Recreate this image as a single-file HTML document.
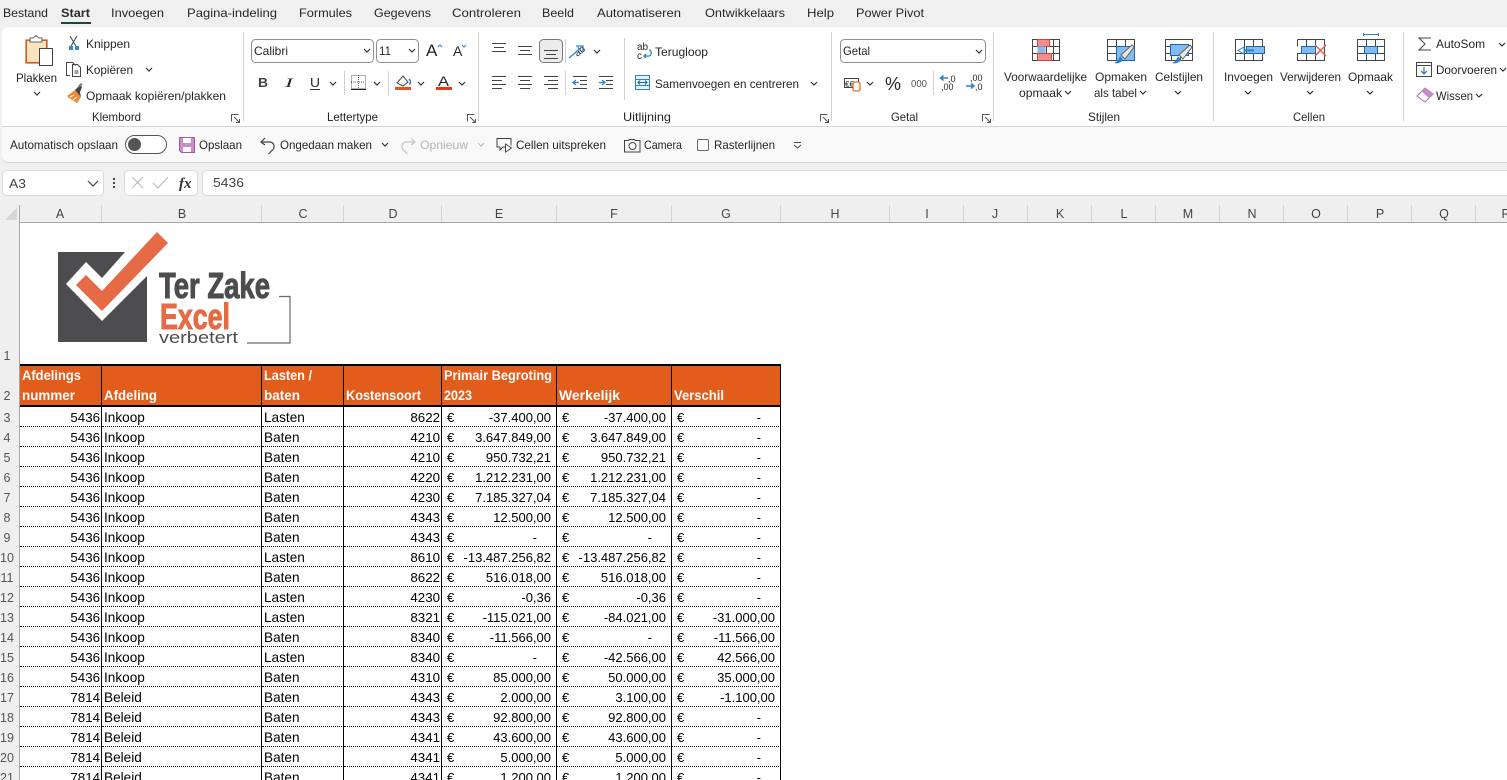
<!DOCTYPE html>
<html lang="nl"><head><meta charset="utf-8"><title>Excel</title>
<style>
html,body{margin:0;padding:0;width:1507px;height:780px;overflow:hidden;background:#fff}
#w{position:relative;width:1507px;height:780px;overflow:hidden}
svg{position:absolute;left:0;top:0}
svg text{font-family:"Liberation Sans",sans-serif;font-size:12px;fill:#262626}
.c text{font-size:12.5px;fill:#444;text-anchor:middle}
.r text{font-size:12.5px;fill:#555;text-anchor:middle}
table{position:absolute;left:20px;top:407px;border-collapse:separate;border-spacing:0;table-layout:fixed;width:761px;font:13.3px "Liberation Sans",sans-serif;color:#000}
td{height:17px;padding:2px 0 0;border-bottom:1px dotted #000;border-right:1px solid #000;line-height:17px;white-space:nowrap;overflow:hidden;box-sizing:content-box;position:relative}
td.n{text-align:right;padding-right:1px}
td.l{padding-left:2px;font-size:13.6px}
td.m{text-align:right;padding-right:5px;font-size:13px}
td.m i{font-style:normal;position:absolute;left:5px;top:2px}
td.d{text-align:right;padding-right:19px;font-size:13px}
td.d i{font-style:normal;position:absolute;left:5px;top:2px}
</style></head><body><div id="w">
<svg width="1507" height="780" viewBox="0 0 1507 780" xmlns="http://www.w3.org/2000/svg">
<defs>
<path id="ch" d="M0 0l3 3 3-3" fill="none" stroke="#333" stroke-width="1.2"/>
<path id="chg" d="M0 0l3 3 3-3" fill="none" stroke="#bbb" stroke-width="1.2"/>
<path id="cor" d="M0 7V0h7M2.500 2.500l5 5M8 4.500V8H4.500" fill="none" stroke="#555" stroke-width="1"/>
</defs>
<rect width="1507" height="205" fill="#f0f0f0"/>
<!-- tabs -->
<text x="3" y="17" textLength="45" lengthAdjust="spacingAndGlyphs">Bestand</text>
<text x="61" y="17" textLength="29" lengthAdjust="spacingAndGlyphs" style="font-weight:bold;fill:#2b2b2b">Start</text>
<rect x="61" y="22" width="30" height="2" fill="#20463a"/>
<text x="111" y="17" textLength="53" lengthAdjust="spacingAndGlyphs">Invoegen</text>
<text x="187" y="17" textLength="90" lengthAdjust="spacingAndGlyphs">Pagina-indeling</text>
<text x="299" y="17" textLength="53" lengthAdjust="spacingAndGlyphs">Formules</text>
<text x="374" y="17" textLength="57" lengthAdjust="spacingAndGlyphs">Gegevens</text>
<text x="452" y="17" textLength="69" lengthAdjust="spacingAndGlyphs">Controleren</text>
<text x="542" y="17" textLength="32" lengthAdjust="spacingAndGlyphs">Beeld</text>
<text x="597" y="17" textLength="84" lengthAdjust="spacingAndGlyphs">Automatiseren</text>
<text x="705" y="17" textLength="80" lengthAdjust="spacingAndGlyphs">Ontwikkelaars</text>
<text x="807" y="17" textLength="27" lengthAdjust="spacingAndGlyphs">Help</text>
<text x="856" y="17" textLength="68" lengthAdjust="spacingAndGlyphs">Power Pivot</text>
<!-- ribbon panel -->
<path d="M2 162V33a6 6 0 0 1 6-6H1507V162H8a6 6 0 0 1-6-6z" fill="#000" opacity=".12" transform="translate(0,1)"/>
<path d="M2 156V33a6 6 0 0 1 6-6H1507V162H8a6 6 0 0 1-6-6z" fill="#fff"/>
<path d="M2 127H1507V162H8a6 6 0 0 1-6-6z" fill="#f9f9f9"/>
<rect x="2" y="126" width="1505" height="1" fill="#d6d6d6"/>
<!-- group separators -->
<g fill="#cfcfcf">
<rect x="243" y="32" width="1" height="89"/><rect x="478" y="32" width="1" height="89"/><rect x="831" y="32" width="1" height="89"/><rect x="993" y="32" width="1" height="89"/><rect x="1213" y="32" width="1" height="89"/><rect x="1403" y="32" width="1" height="89"/>
<rect x="344" y="71" width="1" height="24"/><rect x="388" y="71" width="1" height="24"/><rect x="565" y="39" width="1" height="24"/><rect x="565" y="71" width="1" height="24"/><rect x="624" y="38" width="1" height="62"/><rect x="933" y="71" width="1" height="24"/>
</g>
<!-- clipboard -->
<rect x="26.500" y="40.500" width="20" height="22" fill="#fbe3c0" stroke="#d2691e" stroke-width="1"/>
<rect x="26" y="40" width="21" height="23" fill="none" stroke="#d9541e" stroke-width="1.2"/>
<path d="M30 40v-2h3l3-2.500 3 2.500h3v4H30z" fill="#fff" stroke="#666"/>
<rect x="39.500" y="48.500" width="13" height="17" fill="#fff" stroke="#444"/>
<text x="16" y="82" textLength="41" lengthAdjust="spacingAndGlyphs">Plakken</text>
<use href="#ch" x="34" y="92"/>
<path d="M70 48L77 36M77 48L70 36" stroke="#444" fill="none"/>
<rect x="69" y="46" width="4" height="4" fill="#3b87c9"/><rect x="75" y="46" width="4" height="4" fill="#3b87c9"/>
<text x="86" y="48" textLength="44" lengthAdjust="spacingAndGlyphs">Knippen</text>
<path d="M70 75.500h-3.500V62.500h6l3 3M72.500 64.500h5l3 3v9h-8z" fill="#fff" stroke="#444"/>
<path d="M74.500 71h4M74.500 73h4" stroke="#444"/>
<text x="86" y="74" textLength="47" lengthAdjust="spacingAndGlyphs">Kopiëren</text>
<use href="#ch" x="146" y="68"/>
<path d="M67 96l8-6 6 7-4 6c-3-2-7-4-10-7z" fill="#f08a30"/>
<path d="M70 97l4-2M73 100l4-3" stroke="#fff" fill="none"/>
<path d="M75 90l5-5 2 2-2 5 1 5z" fill="#444"/>
<path d="M78 86l3-3 1.500 1.500-3 3z" fill="#777"/>
<text x="86" y="100" textLength="140" lengthAdjust="spacingAndGlyphs">Opmaak kopiëren/plakken</text>
<text x="92" y="121" textLength="49" lengthAdjust="spacingAndGlyphs">Klembord</text>
<use href="#cor" x="231.500" y="114.500"/>
<!-- font -->
<rect x="251.500" y="39.500" width="122" height="23" rx="4" fill="#fff" stroke="#8f8f8f"/>
<text x="254" y="55" textLength="34" lengthAdjust="spacingAndGlyphs">Calibri</text>
<use href="#ch" x="364" y="49"/>
<rect x="376.500" y="39.500" width="42" height="23" rx="4" fill="#fff" stroke="#8f8f8f"/>
<text x="379" y="55" textLength="12" lengthAdjust="spacingAndGlyphs">11</text>
<use href="#ch" x="409" y="49"/>
<text x="426" y="56" style="font-size:17px">A</text>
<path d="M438 47l2-2 2 2" fill="none" stroke="#2f80c8"/>
<text x="453" y="56" style="font-size:14px">A</text>
<path d="M462 45l2 2 2-2" fill="none" stroke="#2f80c8"/>
<text x="258" y="87" textLength="10" lengthAdjust="spacingAndGlyphs" style="font-weight:bold;font-size:13px;fill:#444">B</text>
<text x="285" y="87" textLength="8" lengthAdjust="spacingAndGlyphs" style="font-style:italic;font-size:13px;font-family:'Liberation Serif',serif">I</text>
<text x="310" y="87" textLength="10" lengthAdjust="spacingAndGlyphs" style="font-size:13px">U</text>
<rect x="310" y="89" width="10" height="1" fill="#333"/>
<use href="#ch" x="330" y="82"/>
<rect x="351.500" y="75.500" width="14" height="13" fill="none" stroke="#666" stroke-dasharray="1 1"/>
<path d="M358.500 75v14M351 82h15" stroke="#666" stroke-dasharray="1 1"/>
<rect x="351" y="89" width="15" height="1" fill="#222"/>
<use href="#ch" x="374" y="82"/>
<path d="M397 83l6-7 5 6-5 4z" fill="#fff" stroke="#444"/>
<path d="M409 84c2 0 2-3 0-5" fill="none" stroke="#2f80c8" stroke-width="1.500"/>
<rect x="395" y="87" width="16" height="3" fill="#e2571c"/>
<use href="#ch" x="418" y="82"/>
<text x="438" y="86" textLength="11" lengthAdjust="spacingAndGlyphs" style="font-size:14px">A</text>
<rect x="436" y="87" width="16" height="3" fill="#e23c10"/>
<use href="#ch" x="459" y="82"/>
<text x="327" y="121" textLength="51" lengthAdjust="spacingAndGlyphs">Lettertype</text>
<use href="#cor" x="467.500" y="114.500"/>
<!-- align -->
<g stroke="#444" fill="none">
<path d="M492 43.500h14M494 47.500h10M492 51.500h14"/>
<path d="M518 46.500h14M520 50.500h10M518 54.500h14"/>
<rect x="539.500" y="39.500" width="23" height="23" rx="4" fill="#ececec" stroke="#777"/>
<path d="M544 50.500h14M546 54.500h10M544 58.500h14"/>
<path d="M492 76.500h14M492 80.500h10M492 84.500h14M492 88.500h10"/>
<path d="M518 76.500h14M520 80.500h10M518 84.500h14M520 88.500h10"/>
<path d="M544 76.500h14M548 80.500h10M544 84.500h14M548 88.500h10"/>
<path d="M573 76.500h14M580 80.500h7M580 84.500h7M573 88.500h14"/>
<path d="M599 76.500h14M606 80.500h7M606 84.500h7M599 88.500h14"/>
</g>
<path d="M579 82.500h-6M576 80l-3 2.500 3 2.500" stroke="#2f80c8" stroke-width="1.300" fill="none"/>
<path d="M599 82.500h6M602 80l3 2.500-3 2.500" stroke="#2f80c8" stroke-width="1.300" fill="none"/>
<text x="573" y="55" transform="rotate(-40 578 50)" style="font-size:10px">ab</text>
<path d="M569 58l13-11M576 46h7v6" fill="none" stroke="#2f80c8" stroke-width="1.300"/>
<use href="#ch" x="594" y="50"/>
<text x="637" y="50" style="font-size:10px">ab</text>
<text x="637" y="59" style="font-size:10px">c</text>
<path d="M649 50c3 0 3 6 0 6h-5M646 54l-2 2 2 2" fill="none" stroke="#2f80c8" stroke-width="1.300"/>
<text x="655" y="56" textLength="53" lengthAdjust="spacingAndGlyphs">Terugloop</text>
<rect x="635.500" y="75.500" width="14" height="14" fill="#e8f2fb" stroke="#2f80c8"/>
<path d="M635 79.500h15M635 85.500h15" stroke="#2f80c8"/>
<path d="M638 82.500h9M640 80.500l-2 2 2 2M645 80.500l2 2-2 2" stroke="#1668b5" fill="none"/>
<text x="655" y="88" textLength="144" lengthAdjust="spacingAndGlyphs">Samenvoegen en centreren</text>
<use href="#ch" x="811" y="82"/>
<text x="623" y="121" textLength="48" lengthAdjust="spacingAndGlyphs">Uitlijning</text>
<use href="#cor" x="820.500" y="114.500"/>
<!-- number -->
<rect x="840.500" y="39.500" width="145" height="23" rx="4" fill="#fff" stroke="#8f8f8f"/>
<text x="843" y="55" textLength="27" lengthAdjust="spacingAndGlyphs">Getal</text>
<use href="#ch" x="976" y="50"/>
<rect x="844.500" y="78.500" width="14" height="9" fill="none" stroke="#444"/>
<text x="845" y="87" style="font-size:8px">€€</text>
<rect x="853" y="82" width="7" height="9" rx="2" fill="#fff" stroke="#e8701e" stroke-width="1.300"/>
<use href="#ch" x="867" y="82"/>
<text x="885" y="90" style="font-size:18px" textLength="16" lengthAdjust="spacingAndGlyphs">%</text>
<text x="911" y="87" textLength="16" lengthAdjust="spacingAndGlyphs" style="font-size:10px;fill:#555">000</text>
<path d="M948 78h-7M943.500 75.500l-3 2.500 3 2.500" fill="none" stroke="#2f80c8" stroke-width="1.500"/>
<text x="948" y="82" style="font-size:9px">,0</text>
<text x="941" y="90" style="font-size:9px">,00</text>
<text x="970" y="81" style="font-size:9px">,00</text>
<path d="M966 86h8M971 83.500l3 2.500-3 2.500" fill="none" stroke="#2f80c8" stroke-width="1.500"/>
<text x="975" y="90" style="font-size:9px">,0</text>
<text x="891" y="121" textLength="27" lengthAdjust="spacingAndGlyphs">Getal</text>
<use href="#cor" x="982.500" y="114.500"/>
<!-- styles -->
<g stroke="#444" fill="none">
<rect x="1032.500" y="39.500" width="27" height="21" fill="#fff"/>
<path d="M1039.500 39v22M1046.500 39v22M1053.500 39v22M1032 46.500h28M1032 53.500h28"/>
<rect x="1107.500" y="39.500" width="27" height="21" fill="#fff"/>
<path d="M1116.500 39v22M1125.500 39v22M1107 46.500h28M1107 53.500h28"/>
<rect x="1165.500" y="39.500" width="27" height="21" fill="#fff"/>
<path d="M1165 46.500h6M1171.500 54v7M1180.500 54v7M1165 53.500h28"/>
</g>
<rect x="1037.500" y="39.500" width="12" height="7" fill="#ee8f94" stroke="#d8432c"/>
<rect x="1037.500" y="46.500" width="8" height="7" fill="#82bbec"/>
<rect x="1037.500" y="53.500" width="14" height="7" fill="#ee8f94" stroke="#d8432c"/>
<rect x="1116.500" y="46.500" width="18" height="14" fill="#82bbec" stroke="#1668b5"/>
<rect x="1170.500" y="44.500" width="18" height="11" fill="#82bbec" stroke="#1668b5"/>
<path d="M1114 63c3 1 7 0 9-3l-3-4c-1 3-3 6-6 7z" fill="#2f80c8"/>
<path d="M1121 55l11-10 2 2-9 12z" fill="#e8e8e8" stroke="#666"/>
<path d="M1172 63c3 1 7 0 9-3l-3-4c-1 3-3 6-6 7z" fill="#2f80c8"/>
<path d="M1179 55l11-10 2 2-9 12z" fill="#e8e8e8" stroke="#666"/>
<text x="1004" y="81" textLength="83" lengthAdjust="spacingAndGlyphs">Voorwaardelijke</text>
<text x="1019" y="97" textLength="43" lengthAdjust="spacingAndGlyphs">opmaak</text>
<use href="#ch" x="1065" y="91"/>
<text x="1095" y="81" textLength="52" lengthAdjust="spacingAndGlyphs">Opmaken</text>
<text x="1094" y="97" textLength="43" lengthAdjust="spacingAndGlyphs">als tabel</text>
<use href="#ch" x="1140" y="91"/>
<text x="1155" y="81" textLength="48" lengthAdjust="spacingAndGlyphs">Celstijlen</text>
<use href="#ch" x="1175" y="91"/>
<text x="1088" y="121" textLength="32" lengthAdjust="spacingAndGlyphs">Stijlen</text>
<!-- cells -->
<g stroke="#444" fill="none">
<rect x="1235.500" y="39.500" width="27" height="21" fill="#fff"/>
<path d="M1244.500 39v22M1253.500 39v22M1235 53.500h28"/>
<path d="M1297.500 39.500h27v21h-27v-7h7M1297.500 39.500v7M1306.500 39v7M1315.500 39v7M1306.500 54v7M1315.500 54v7" fill="#fff"/>
<rect x="1357.500" y="39.500" width="27" height="21" fill="#fff"/>
<path d="M1366.500 39v22M1375.500 39v22M1357 46.500h28M1357 53.500h28"/>
</g>
<rect x="1246.500" y="46.500" width="18" height="7" fill="#82bbec" stroke="#1668b5"/>
<path d="M1254 50h-10v-3l-6 3.500 6 3.500v-3h10" fill="#fff" stroke="#2f80c8"/>
<rect x="1301.500" y="46.500" width="14" height="7" fill="#82bbec" stroke="#1668b5"/>
<path d="M1315 45l11 11M1326 45l-11 11" stroke="#e8604a" stroke-width="1.500"/>
<rect x="1364.500" y="46.500" width="13" height="7" fill="#82bbec" stroke="#1668b5"/>
<path d="M1363.500 33v3M1378.500 33v3M1363 34.500h16" stroke="#2f80c8"/>
<text x="1224" y="81" textLength="49" lengthAdjust="spacingAndGlyphs">Invoegen</text>
<use href="#ch" x="1245" y="91"/>
<text x="1280" y="81" textLength="61" lengthAdjust="spacingAndGlyphs">Verwijderen</text>
<use href="#ch" x="1307" y="91"/>
<text x="1348" y="81" textLength="45" lengthAdjust="spacingAndGlyphs">Opmaak</text>
<use href="#ch" x="1367" y="91"/>
<text x="1293" y="121" textLength="32" lengthAdjust="spacingAndGlyphs">Cellen</text>
<!-- edit -->
<path d="M1431 38h-12l6 6-6 6h12" fill="none" stroke="#444"/>
<text x="1436" y="48" textLength="49" lengthAdjust="spacingAndGlyphs">AutoSom</text>
<use href="#ch" x="1499" y="43"/>
<rect x="1416.500" y="62.500" width="15" height="14" fill="#fff" stroke="#444"/>
<path d="M1416 65.500h15" stroke="#444"/>
<path d="M1424 67v7M1421 71l3 3 3-3" fill="none" stroke="#2f80c8" stroke-width="1.300"/>
<text x="1436" y="74" textLength="61" lengthAdjust="spacingAndGlyphs">Doorvoeren</text>
<use href="#ch" x="1500" y="68"/>
<path d="M1417 96l8-8 8 6-8 8z" fill="#fff" stroke="#a871a8"/>
<path d="M1425 88l8 6-4 4-8-7z" fill="#c48cc4"/>
<text x="1436" y="100" textLength="37" lengthAdjust="spacingAndGlyphs">Wissen</text>
<use href="#ch" x="1476" y="94"/>
<!-- QAT -->
<text x="10" y="149" textLength="108" lengthAdjust="spacingAndGlyphs">Automatisch opslaan</text>
<rect x="125.500" y="135.500" width="41" height="18" rx="9" fill="#fff" stroke="#555"/>
<circle cx="134.500" cy="144.500" r="6.500" fill="#555"/>
<path d="M179.500 137.500h15v15h-13l-2-2z" fill="#c98fc6" stroke="#a45ba4"/>
<rect x="183" y="138" width="8" height="5" fill="#fff"/><rect x="183" y="147" width="8" height="5" fill="#fff"/>
<text x="199" y="149" textLength="43" lengthAdjust="spacingAndGlyphs">Opslaan</text>
<path d="M265 138l-4 4 4 3M261.500 142h9c4 1 5 6 1 9l-3 3" fill="none" stroke="#444" stroke-width="1.200"/>
<text x="280" y="149" textLength="92" lengthAdjust="spacingAndGlyphs">Ongedaan maken</text>
<use href="#ch" x="382" y="143"/>
<path d="M411 138l4 4-4 3M414.500 142h-9c-4 1-5 6-1 9l3 3" fill="none" stroke="#c4c4c4" stroke-width="1.200"/>
<text x="420" y="149" textLength="48" lengthAdjust="spacingAndGlyphs" style="fill:#b5b5b5">Opnieuw</text>
<use href="#chg" x="478" y="143"/>
<path d="M505 147h-2l-3 3v-3h-3v-8.500h14v7" fill="none" stroke="#444"/>
<path d="M505.500 144v8l6-4z" fill="#fff" stroke="#444"/>
<text x="516" y="149" textLength="90" lengthAdjust="spacingAndGlyphs">Cellen uitspreken</text>
<path d="M624.500 140.500h4l1-1h5l1 1h4.500v11.500h-15.500z" fill="none" stroke="#444"/>
<circle cx="632.500" cy="146" r="3.500" fill="none" stroke="#444"/>
<text x="644" y="149" textLength="38" lengthAdjust="spacingAndGlyphs">Camera</text>
<rect x="697.500" y="139.500" width="11" height="11" rx="1.500" fill="#fff" stroke="#666"/>
<text x="714" y="149" textLength="61" lengthAdjust="spacingAndGlyphs">Rasterlijnen</text>
<path d="M794 142.500h7M794 145l3.500 3 3.500-3" fill="none" stroke="#444"/>
<!-- formula -->
<rect x="2.500" y="170.500" width="101" height="25" rx="4" fill="#fff" stroke="#dcdcdc"/>
<text x="9" y="188" textLength="17" lengthAdjust="spacingAndGlyphs" style="fill:#444;font-size:13px">A3</text>
<path d="M88 181l5 5 5-5" fill="none" stroke="#444" stroke-width="1.200"/>
<rect x="113" y="178" width="2" height="2" fill="#444"/><rect x="113" y="182" width="2" height="2" fill="#444"/><rect x="113" y="186" width="2" height="2" fill="#444"/>
<rect x="124.500" y="170.500" width="73" height="25" rx="4" fill="#fff" stroke="#dcdcdc"/>
<path d="M132 177l11 11M143 177l-11 11" stroke="#bcbcbc" stroke-width="1.200"/>
<path d="M153 183l5 5 10-11" fill="none" stroke="#bcbcbc" stroke-width="1.200"/>
<text x="179" y="188" style="font-family:'Liberation Serif',serif;font-style:italic;font-weight:bold;font-size:15px;fill:#333">fx</text>
<rect x="202.500" y="170.500" width="1310" height="25" rx="4" fill="#fff" stroke="#dcdcdc"/>
<text x="213" y="187" textLength="31" lengthAdjust="spacingAndGlyphs" style="fill:#444;font-size:13px">5436</text>
<!-- headers -->
<rect x="0" y="205" width="1507" height="17" fill="#efefef"/>
<rect x="0" y="222" width="1507" height="1" fill="#a6a6a6"/>
<rect x="0" y="205" width="20" height="575" fill="#efefef"/>
<rect x="19" y="205" width="1" height="575" fill="#a6a6a6"/>
<path d="M17 208v12H5z" fill="#d6d6d6"/>
<g fill="#d4d4d4">
<rect x="101" y="205" width="1" height="17"/><rect x="261" y="205" width="1" height="17"/><rect x="343" y="205" width="1" height="17"/><rect x="441" y="205" width="1" height="17"/><rect x="556" y="205" width="1" height="17"/><rect x="671" y="205" width="1" height="17"/><rect x="780" y="205" width="1" height="17"/><rect x="889" y="205" width="1" height="17"/><rect x="963" y="205" width="1" height="17"/><rect x="1027" y="205" width="1" height="17"/><rect x="1091" y="205" width="1" height="17"/><rect x="1155" y="205" width="1" height="17"/><rect x="1219" y="205" width="1" height="17"/><rect x="1283" y="205" width="1" height="17"/><rect x="1347" y="205" width="1" height="17"/><rect x="1411" y="205" width="1" height="17"/><rect x="1475" y="205" width="1" height="17"/>
</g>
<g class="c">
<text x="60" y="218">A</text><text x="182" y="218">B</text><text x="303" y="218">C</text><text x="393" y="218">D</text><text x="499" y="218">E</text><text x="614" y="218">F</text><text x="726" y="218">G</text><text x="835" y="218">H</text><text x="927" y="218">I</text><text x="995" y="218">J</text><text x="1060" y="218">K</text><text x="1124" y="218">L</text><text x="1188" y="218">M</text><text x="1252" y="218">N</text><text x="1316" y="218">O</text><text x="1380" y="218">P</text><text x="1444" y="218">Q</text><text x="1506" y="218">R</text>
</g>
<g class="r">
<text x="7" y="360">1</text><text x="7" y="400">2</text>
<text x="7" y="422">3</text><text x="7" y="442">4</text><text x="7" y="462">5</text><text x="7" y="482">6</text><text x="7" y="502">7</text><text x="7" y="522">8</text><text x="7" y="542">9</text><text x="7" y="562">10</text><text x="7" y="582">11</text><text x="7" y="602">12</text><text x="7" y="622">13</text><text x="7" y="642">14</text><text x="7" y="662">15</text><text x="7" y="682">16</text><text x="7" y="702">17</text><text x="7" y="722">18</text><text x="7" y="742">19</text><text x="7" y="762">20</text><text x="7" y="782">21</text>
</g>
<!-- logo -->
<rect x="58" y="252" width="89" height="90" fill="#4d4d4f"/>
<path d="M66 284l20-22 16 16 23-26h22v24l-45 45z" fill="#fff"/>
<path d="M147 252h-22v-22h22z" fill="#fff"/>
<path d="M157 232l11 11-66 68-26-26 10-10 16 16z" fill="#e56a45"/>
<text x="159" y="298" textLength="111" lengthAdjust="spacingAndGlyphs" style="font-weight:bold;font-size:36px;fill:#4d4d4f;stroke:#4d4d4f;stroke-width:1">Ter Zake</text>
<text x="160" y="329" textLength="70" lengthAdjust="spacingAndGlyphs" style="font-weight:bold;font-size:36px;fill:#e56a45;stroke:#e56a45;stroke-width:1">Excel</text>
<text x="159" y="343" textLength="79" lengthAdjust="spacingAndGlyphs" style="font-size:17px;fill:#4d4d4f">verbetert</text>
<path d="M279 296.500h11v46.500h-43" fill="none" stroke="#6a6a6a" stroke-width="1.200"/>
<!-- sheet header -->
<rect x="20" y="364" width="761" height="43" fill="#e25c1c"/>
<rect x="20" y="364" width="761" height="2" fill="#000"/>
<rect x="20" y="405" width="761" height="2" fill="#000"/>
<g fill="#000">
<rect x="101" y="364" width="1" height="43"/><rect x="261" y="364" width="1" height="43"/><rect x="343" y="364" width="1" height="43"/><rect x="441" y="364" width="1" height="43"/><rect x="556" y="364" width="1" height="43"/><rect x="671" y="364" width="1" height="43"/><rect x="780" y="364" width="1" height="43"/>
</g>
<g style="font-weight:bold">
<text x="22" y="380" textLength="59" lengthAdjust="spacingAndGlyphs" style="fill:#fff;font-size:13.5px">Afdelings</text>
<text x="22" y="400" textLength="53" lengthAdjust="spacingAndGlyphs" style="fill:#fff;font-size:13.5px">nummer</text>
<text x="104" y="400" textLength="53" lengthAdjust="spacingAndGlyphs" style="fill:#fff;font-size:13.5px">Afdeling</text>
<text x="264" y="380" textLength="48" lengthAdjust="spacingAndGlyphs" style="fill:#fff;font-size:13.5px">Lasten /</text>
<text x="264" y="400" textLength="36" lengthAdjust="spacingAndGlyphs" style="fill:#fff;font-size:13.5px">baten</text>
<text x="346" y="400" textLength="75" lengthAdjust="spacingAndGlyphs" style="fill:#fff;font-size:13.5px">Kostensoort</text>
<text x="444" y="380" textLength="108" lengthAdjust="spacingAndGlyphs" style="fill:#fff;font-size:13.5px">Primair Begroting</text>
<text x="444" y="400" textLength="28" lengthAdjust="spacingAndGlyphs" style="fill:#fff;font-size:13.5px">2023</text>
<text x="559" y="400" textLength="61" lengthAdjust="spacingAndGlyphs" style="fill:#fff;font-size:13.5px">Werkelijk</text>
<text x="674" y="400" textLength="50" lengthAdjust="spacingAndGlyphs" style="fill:#fff;font-size:13.5px">Verschil</text>
</g>
</svg>
<table>
<colgroup><col style="width:82px"><col style="width:160px"><col style="width:82px"><col style="width:98px"><col style="width:115px"><col style="width:115px"><col style="width:109px"></colgroup>
<tr><td class="n">5436</td><td class="l">Inkoop</td><td class="l">Lasten</td><td class="n">8622</td><td class="m"><i>€</i>-37.400,00</td><td class="m"><i>€</i>-37.400,00</td><td class="d"><i>€</i>-</td></tr>
<tr><td class="n">5436</td><td class="l">Inkoop</td><td class="l">Baten</td><td class="n">4210</td><td class="m"><i>€</i>3.647.849,00</td><td class="m"><i>€</i>3.647.849,00</td><td class="d"><i>€</i>-</td></tr>
<tr><td class="n">5436</td><td class="l">Inkoop</td><td class="l">Baten</td><td class="n">4210</td><td class="m"><i>€</i>950.732,21</td><td class="m"><i>€</i>950.732,21</td><td class="d"><i>€</i>-</td></tr>
<tr><td class="n">5436</td><td class="l">Inkoop</td><td class="l">Baten</td><td class="n">4220</td><td class="m"><i>€</i>1.212.231,00</td><td class="m"><i>€</i>1.212.231,00</td><td class="d"><i>€</i>-</td></tr>
<tr><td class="n">5436</td><td class="l">Inkoop</td><td class="l">Baten</td><td class="n">4230</td><td class="m"><i>€</i>7.185.327,04</td><td class="m"><i>€</i>7.185.327,04</td><td class="d"><i>€</i>-</td></tr>
<tr><td class="n">5436</td><td class="l">Inkoop</td><td class="l">Baten</td><td class="n">4343</td><td class="m"><i>€</i>12.500,00</td><td class="m"><i>€</i>12.500,00</td><td class="d"><i>€</i>-</td></tr>
<tr><td class="n">5436</td><td class="l">Inkoop</td><td class="l">Baten</td><td class="n">4343</td><td class="d"><i>€</i>-</td><td class="d"><i>€</i>-</td><td class="d"><i>€</i>-</td></tr>
<tr><td class="n">5436</td><td class="l">Inkoop</td><td class="l">Lasten</td><td class="n">8610</td><td class="m"><i>€</i>-13.487.256,82</td><td class="m"><i>€</i>-13.487.256,82</td><td class="d"><i>€</i>-</td></tr>
<tr><td class="n">5436</td><td class="l">Inkoop</td><td class="l">Baten</td><td class="n">8622</td><td class="m"><i>€</i>516.018,00</td><td class="m"><i>€</i>516.018,00</td><td class="d"><i>€</i>-</td></tr>
<tr><td class="n">5436</td><td class="l">Inkoop</td><td class="l">Lasten</td><td class="n">4230</td><td class="m"><i>€</i>-0,36</td><td class="m"><i>€</i>-0,36</td><td class="d"><i>€</i>-</td></tr>
<tr><td class="n">5436</td><td class="l">Inkoop</td><td class="l">Lasten</td><td class="n">8321</td><td class="m"><i>€</i>-115.021,00</td><td class="m"><i>€</i>-84.021,00</td><td class="m"><i>€</i>-31.000,00</td></tr>
<tr><td class="n">5436</td><td class="l">Inkoop</td><td class="l">Baten</td><td class="n">8340</td><td class="m"><i>€</i>-11.566,00</td><td class="d"><i>€</i>-</td><td class="m"><i>€</i>-11.566,00</td></tr>
<tr><td class="n">5436</td><td class="l">Inkoop</td><td class="l">Lasten</td><td class="n">8340</td><td class="d"><i>€</i>-</td><td class="m"><i>€</i>-42.566,00</td><td class="m"><i>€</i>42.566,00</td></tr>
<tr><td class="n">5436</td><td class="l">Inkoop</td><td class="l">Baten</td><td class="n">4310</td><td class="m"><i>€</i>85.000,00</td><td class="m"><i>€</i>50.000,00</td><td class="m"><i>€</i>35.000,00</td></tr>
<tr><td class="n">7814</td><td class="l">Beleid</td><td class="l">Baten</td><td class="n">4343</td><td class="m"><i>€</i>2.000,00</td><td class="m"><i>€</i>3.100,00</td><td class="m"><i>€</i>-1.100,00</td></tr>
<tr><td class="n">7814</td><td class="l">Beleid</td><td class="l">Baten</td><td class="n">4343</td><td class="m"><i>€</i>92.800,00</td><td class="m"><i>€</i>92.800,00</td><td class="d"><i>€</i>-</td></tr>
<tr><td class="n">7814</td><td class="l">Beleid</td><td class="l">Baten</td><td class="n">4341</td><td class="m"><i>€</i>43.600,00</td><td class="m"><i>€</i>43.600,00</td><td class="d"><i>€</i>-</td></tr>
<tr><td class="n">7814</td><td class="l">Beleid</td><td class="l">Baten</td><td class="n">4341</td><td class="m"><i>€</i>5.000,00</td><td class="m"><i>€</i>5.000,00</td><td class="d"><i>€</i>-</td></tr>
<tr><td class="n">7814</td><td class="l">Beleid</td><td class="l">Baten</td><td class="n">4341</td><td class="m"><i>€</i>1.200,00</td><td class="m"><i>€</i>1.200,00</td><td class="d"><i>€</i>-</td></tr>
</table>
</div></body></html>
